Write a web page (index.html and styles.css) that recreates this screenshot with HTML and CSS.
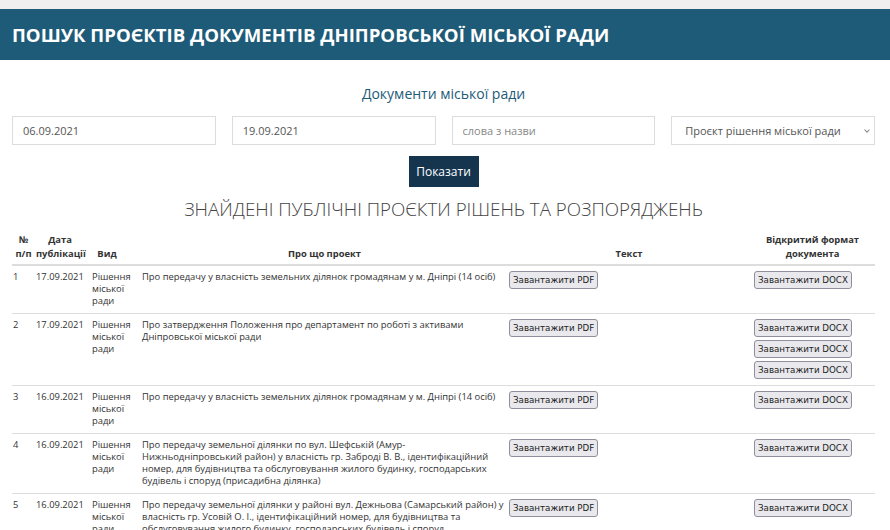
FILE: index.html
```html
<!DOCTYPE html>
<html lang="uk">
<head>
<meta charset="utf-8">
<title>Пошук проєктів документів</title>
<link rel="stylesheet" href="styles.css">
</head>
<body>
<div class="topstrip"></div>
<header class="hdr"><h1>ПОШУК ПРОЄКТІВ ДОКУМЕНТІВ ДНІПРОВСЬКОЇ МІСЬКОЇ РАДИ</h1></header>
<main class="main">
  <div class="subtitle">Документи міської ради</div>
  <form class="filters">
    <input class="field" type="text" value="06.09.2021">
    <input class="field" type="text" value="19.09.2021">
    <input class="field" type="text" placeholder="слова з назви">
    <div class="selectbox"><span>Проєкт рішення міської ради</span><svg class="chev" width="8" height="6" viewBox="0 0 8 6"><path d="M1.5 1.5 L4 4.2 L6.5 1.5" fill="none" stroke="#888" stroke-width="1.1"/></svg></div>
  </form>
  <div class="btnrow"><button class="show" type="button">Показати</button></div>
  <h2 class="found">ЗНАЙДЕНІ ПУБЛІЧНІ ПРОЄКТИ РІШЕНЬ ТА РОЗПОРЯДЖЕНЬ</h2>
  <table class="tbl">
    <colgroup><col class="c1"><col class="c2"><col class="c3"><col class="c4"><col class="c5"><col class="c6"></colgroup>
    <thead>
      <tr><th class="k1">№<br>п/п</th><th class="k2">Дата<br>публікації</th><th class="k3">Вид</th><th class="k4">Про що проект</th><th class="k5">Текст</th><th class="k6">Відкритий формат<br>документа</th></tr>
    </thead>
    <tbody>
      <tr class="r1"><td class="k1">1</td><td class="k2">17.09.2021</td><td class="k3">Рішення міської ради</td><td class="k4">Про передачу у власність земельних ділянок громадянам у м. Дніпрі (14 осіб)</td><td class="k5"><button class="dl">Завантажити PDF</button></td><td class="k6"><button class="dl">Завантажити DOCX</button></td></tr>
      <tr class="r2"><td class="k1">2</td><td class="k2">17.09.2021</td><td class="k3">Рішення міської ради</td><td class="k4">Про затвердження Положення про департамент по роботі з активами Дніпровської міської ради</td><td class="k5"><button class="dl">Завантажити PDF</button></td><td class="k6"><div class="stack"><button class="dl">Завантажити DOCX</button><button class="dl">Завантажити DOCX</button><button class="dl">Завантажити DOCX</button></div></td></tr>
      <tr class="r3"><td class="k1">3</td><td class="k2">16.09.2021</td><td class="k3">Рішення міської ради</td><td class="k4">Про передачу у власність земельних ділянок громадянам у м. Дніпрі (14 осіб)</td><td class="k5"><button class="dl">Завантажити PDF</button></td><td class="k6"><button class="dl">Завантажити DOCX</button></td></tr>
      <tr class="r4"><td class="k1">4</td><td class="k2">16.09.2021</td><td class="k3">Рішення міської ради</td><td class="k4">Про передачу земельної ділянки по вул. Шефській (Амур-Нижньодніпровський район) у власність гр. Заброді В. В., ідентифікаційний номер, для будівництва та обслуговування жилого будинку, господарських будівель і споруд (присадибна ділянка)</td><td class="k5"><button class="dl">Завантажити PDF</button></td><td class="k6"><button class="dl">Завантажити DOCX</button></td></tr>
      <tr class="r5"><td class="k1">5</td><td class="k2">16.09.2021</td><td class="k3">Рішення міської ради</td><td class="k4">Про передачу земельної ділянки у районі вул. Дежньова (Самарський район) у власність гр. Усовій О. І., ідентифікаційний номер, для будівництва та обслуговування жилого будинку, господарських будівель і споруд (присадибна ділянка)</td><td class="k5"><button class="dl">Завантажити PDF</button></td><td class="k6"><button class="dl">Завантажити DOCX</button></td></tr>
    </tbody>
  </table>
</main>
</body>
</html>
```

FILE: styles.css
```css
* { box-sizing: border-box; }
html, body { margin: 0; padding: 0; background: #fff; overflow: hidden; }
body { font-family: "Open Sans", "Noto Sans", sans-serif; color: #333; }
.topstrip { height: 9px; background: #efefef; }
.hdr { height: 51px; background: #1e5b78; display: flex; align-items: center; padding-left: 12px; }
.hdr h1 { margin: 0; color: #fff; font-size: 18.6px; font-weight: 700; }
.main { padding: 0 15px 0 12px; }
.subtitle { text-align: center; color: #1e5b78; font-size: 14px; margin-top: 24px; line-height: 20px; }
.filters { display: grid; grid-template-columns: repeat(4, 1fr); column-gap: 16px; margin: 12px 0 0; }
.field, .selectbox { height: 29px; border: 1px solid #dcdcdc; background: #fff; font-family: "Open Sans", sans-serif; font-size: 11px; color: #555; padding: 0 10px; outline: none; }
.field::placeholder { color: #888; }
.selectbox { display: flex; align-items: center; justify-content: space-between; padding: 0 3px 0 13px; color: #555; }
.btnrow { display: flex; justify-content: center; margin-top: 11px; }
.show { background: #15354f; color: #fff; border: none; font-family: "Open Sans", sans-serif; font-size: 12px; height: 31px; width: 70px; padding: 0; }
.found { text-align: center; font-weight: 300; font-size: 18.7px; color: #444; margin: 9px 0 0; line-height: 26px; }
.tbl { width: 100%; border-collapse: collapse; margin-top: 11px; font-size: 9.4px; line-height: 12px; table-layout: fixed; }
.c1 { width: 23px; } .c2 { width: 56px; } .c3 { width: 50px; } .c4 { width: 367px; } .c5 { width: 242px; } .c6 { width: 125px; }
.tbl th { font-weight: 700; text-align: center; vertical-align: bottom; padding: 0 1px 3px; border-bottom: 2px solid #ddd; line-height: 14px; color: #333; }
.tbl td { vertical-align: top; padding: 5px 1px 6px; border-top: 1px solid #ddd; color: #333; }
.tbl tr:first-child td { border-top: none; }
.tbl .k2 { padding-right: 7px; }
.tbl .k3 { padding-right: 19px; }
.tbl td.k4 { padding-right: 4px; }
.tbl .k6 { padding-left: 4px; }
.tbl th.k6 { padding-left: 1px; }
.r4 td { height: 60px; }
.dl { display: block; font-family: "DejaVu Sans", sans-serif; font-size: 8.7px; background: #e9e9ed; border: 1px solid #8f8f9d; border-radius: 3px; color: #222; height: 18px; padding: 0 3px; margin: 0; line-height: 14px; }
.stack { display: flex; flex-direction: column; align-items: flex-start; gap: 3px; }
```
